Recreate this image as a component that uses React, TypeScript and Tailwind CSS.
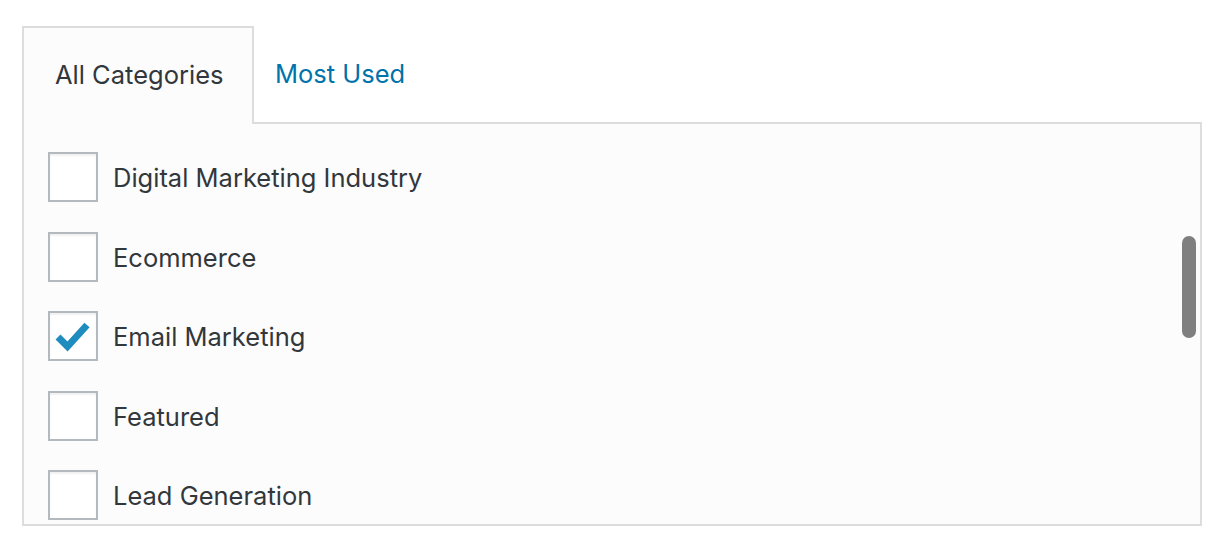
import React from 'react';

const categories = [
    { name: "Digital Marketing Industry", checked: false },
    { name: "Ecommerce", checked: false },
    { name: "Email Marketing", checked: true },
    { name: "Featured", checked: false },
    { name: "Lead Generation", checked: false },
];

function CheckBox({ checked }: { checked: boolean }) {
    return (
        <div className="w-[50px] h-[50px] shrink-0 border-2 border-[#b4b9be] bg-white shadow-[inset_0_2px_2px_rgba(0,0,0,0.06)]">
            {checked && (
                <svg width="46" height="46" viewBox="0 0 46 46">
                    <path d="M8 24 L17.5 33.5 L37 12" fill="none" stroke="#1e8cbe" strokeWidth="7" strokeLinejoin="miter" strokeLinecap="butt" />
                </svg>
            )}
        </div>
    );
}

export default function App() {
    return (
        <div className="w-[1222px] h-[548px] bg-white pt-[26px] pl-[22px] font-['Inter','Liberation_Sans',sans-serif] text-[25.5px]">
            <div className="flex items-end">
                <div className="relative z-10 -mb-[2px] w-[232px] h-[98px] border-2 border-b-0 border-[#dddddd] bg-[#fcfcfc] pl-[31px] pb-[2px] flex items-center text-[#32373c]">
                    All Categories
                </div>
                <div className="h-[96px] pl-[21px] flex items-center text-[#0073aa]">
                    Most Used
                </div>
            </div>
            <div className="relative w-[1180px] h-[404px] border-2 border-[#dddddd] bg-[#fcfcfc] overflow-hidden">
                <div className="pt-[28px] pl-[24px] flex flex-col">
                    {categories.map((c) => (
                        <div key={c.name} className="h-[79.5px] flex items-start">
                            <CheckBox checked={c.checked} />
                            <span className="ml-[15px] mt-[7px] text-[#32373c]">{c.name}</span>
                        </div>
                    ))}
                </div>
                <div className="absolute right-[4px] top-[112px] w-[14px] h-[102px] rounded-full bg-[#7f7f7f]" />
            </div>
        </div>
    );
}
